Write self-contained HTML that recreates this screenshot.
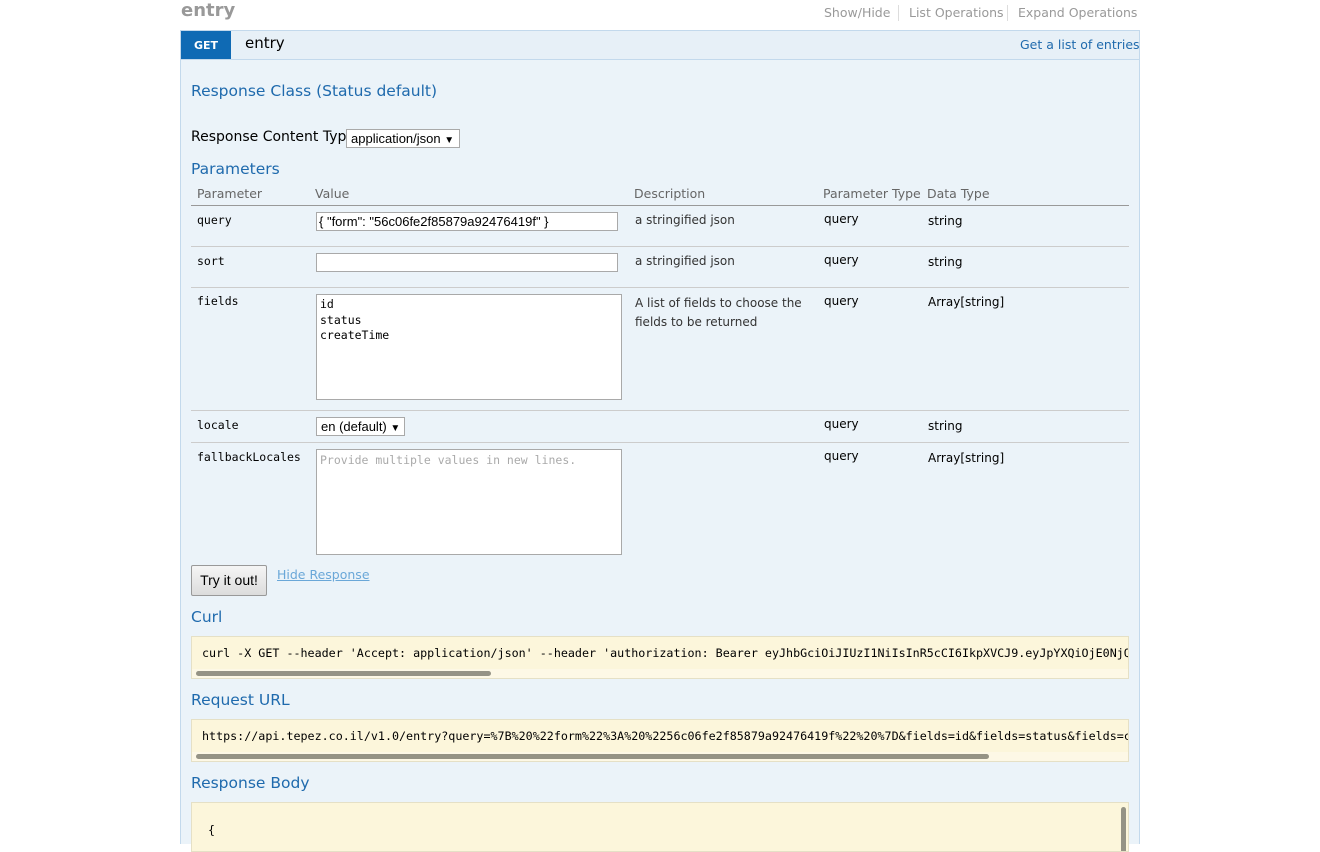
<!DOCTYPE html>
<html><head><meta charset="utf-8"><style>
*{box-sizing:border-box;margin:0;padding:0}
body{width:1320px;height:844px;overflow:hidden;background:#fff;font-family:"DejaVu Sans","Liberation Sans",sans-serif;position:relative}
.a{position:absolute;white-space:nowrap}
.h{color:#1f6aad;font-size:15.5px}
.m{font-family:"DejaVu Sans Mono","Liberation Mono",monospace;font-size:11.5px;color:#000}
.s{font-size:12px;color:#333}
.hr{position:absolute;left:191px;width:938px;height:1px;background:#ccc}
.ta{position:absolute;background:#fff;border:1px solid #a9a9a9}
.box{position:absolute;left:191px;width:938px;background:#fcf6db;border:1px solid #e5e0c6;overflow:hidden}
.sb{position:absolute;height:5px;border-radius:3px;background:#959385}
</style></head><body>
<div class="a" style="left:181px;top:0px;font-size:18px;font-weight:bold;color:#999">entry</div>
<div class="a" style="left:824px;top:5px;font-size:12.5px;color:#999">Show/Hide</div>
<div class="a" style="left:898px;top:5px;width:1px;height:16px;background:#ddd"></div>
<div class="a" style="left:909px;top:5px;font-size:12.5px;color:#999">List Operations</div>
<div class="a" style="left:1007px;top:5px;width:1px;height:16px;background:#ddd"></div>
<div class="a" style="left:1018px;top:5px;font-size:12.5px;color:#999">Expand Operations</div>

<div class="a" style="left:180px;top:30px;width:960px;height:814px;background:#ebf3f9;border:1px solid #c3d9ec;border-bottom:none"></div>
<div class="a" style="left:181px;top:31px;width:958px;height:29px;background:#e7f0f7;border-bottom:1px solid #c3d9ec"></div>
<div class="a" style="left:181px;top:31px;width:50px;height:28px;background:#0f6ab4;color:#fff;font-size:11px;font-weight:bold;text-align:center;line-height:29px">GET</div>
<div class="a" style="left:245px;top:34px;font-size:15px;color:#000">entry</div>
<div class="a" style="left:1020px;top:37px;font-size:12.5px;color:#1f6aad">Get a list of entries</div>

<div class="a h" style="left:191px;top:82px">Response Class (Status default)</div>
<div class="a" style="left:191px;top:129px;font-size:14px;color:#000">Response Content Type</div>
<div class="a" style="left:346px;top:129px;width:114px;height:19px;background:#fff;border:1px solid #a9a9a9;font-family:'Liberation Sans',sans-serif;font-size:13px;padding:1px 4px">application/json <span style="font-size:10px">▼</span></div>
<div class="a h" style="left:191px;top:160px">Parameters</div>

<div class="a" style="left:197px;top:186px;font-size:12.5px;color:#666">Parameter</div>
<div class="a" style="left:315px;top:186px;font-size:12.5px;color:#666">Value</div>
<div class="a" style="left:634px;top:186px;font-size:12.5px;color:#666">Description</div>
<div class="a" style="left:823px;top:186px;font-size:12.5px;color:#666">Parameter Type</div>
<div class="a" style="left:927px;top:186px;font-size:12.5px;color:#666">Data Type</div>
<div class="hr" style="top:205px;background:#999"></div>

<div class="a m" style="left:197px;top:213px">query</div>
<div class="ta" style="left:316px;top:212px;width:302px;height:19px;font-family:'Liberation Sans',sans-serif;font-size:13px;padding:0 2px;line-height:17px">{ "form": "56c06fe2f85879a92476419f" }</div>
<div class="a s" style="left:635px;top:213px">a stringified json</div>
<div class="a s" style="left:824px;top:212px;color:#000">query</div>
<div class="a s" style="left:928px;top:214px;color:#000">string</div>
<div class="hr" style="top:246px"></div>

<div class="a m" style="left:197px;top:254px">sort</div>
<div class="ta" style="left:316px;top:253px;width:302px;height:19px"></div>
<div class="a s" style="left:635px;top:254px">a stringified json</div>
<div class="a s" style="left:824px;top:253px;color:#000">query</div>
<div class="a s" style="left:928px;top:255px;color:#000">string</div>
<div class="hr" style="top:287px"></div>

<div class="a m" style="left:197px;top:294px">fields</div>
<div class="ta m" style="left:316px;top:294px;width:306px;height:106px;padding:2px 3px;line-height:15.5px;white-space:pre">id
status
createTime</div>
<div class="a s" style="left:635px;top:294px;line-height:19px">A list of fields to choose the<br>fields to be returned</div>
<div class="a s" style="left:824px;top:294px;color:#000">query</div>
<div class="a s" style="left:928px;top:295px;color:#000">Array[string]</div>
<div class="hr" style="top:410px"></div>

<div class="a m" style="left:197px;top:418px">locale</div>
<div class="a" style="left:316px;top:417px;width:89px;height:19px;background:#fff;border:1px solid #a9a9a9;font-family:'Liberation Sans',sans-serif;font-size:13px;padding:1px 4px">en (default) <span style="font-size:10px">▼</span></div>
<div class="a s" style="left:824px;top:417px;color:#000">query</div>
<div class="a s" style="left:928px;top:419px;color:#000">string</div>
<div class="hr" style="top:442px"></div>

<div class="a m" style="left:197px;top:450px">fallbackLocales</div>
<div class="ta m" style="left:316px;top:449px;width:306px;height:106px;padding:3px 3px;color:#aaa">Provide multiple values in new lines.</div>
<div class="a s" style="left:824px;top:449px;color:#000">query</div>
<div class="a s" style="left:928px;top:451px;color:#000">Array[string]</div>

<div class="a" style="left:191px;top:565px;width:76px;height:31px;border:1px solid #999;border-radius:2px;background:linear-gradient(#f5f5f5,#dcdcdc);font-family:'Liberation Sans',sans-serif;font-size:14px;text-align:center;line-height:29px;color:#000">Try it out!</div>
<div class="a" style="left:277px;top:567px;font-size:12.5px;color:#6aa7d8;text-decoration:underline">Hide Response</div>

<div class="a h" style="left:191px;top:608px">Curl</div>
<div class="box" style="top:636px;height:43px"><div class="a m" style="left:10px;top:9px;font-size:11.7px">curl -X GET --header 'Accept: application/json' --header 'authorization: Bearer eyJhbGciOiJIUzI1NiIsInR5cCI6IkpXVCJ9.eyJpYXQiOjE0NjQ2NTg</div><div class="a" style="left:0;top:32px;width:938px;height:10px;background:#fdf8e6"></div><div class="sb" style="left:4px;top:34px;width:295px"></div></div>

<div class="a h" style="left:191px;top:691px">Request URL</div>
<div class="box" style="top:719px;height:43px"><div class="a m" style="left:10px;top:9px;font-size:11.7px">https://api.tepez.co.il/v1.0/entry?query=%7B%20%22form%22%3A%20%2256c06fe2f85879a92476419f%22%20%7D&amp;fields=id&amp;fields=status&amp;fields=createTime</div><div class="a" style="left:0;top:32px;width:938px;height:10px;background:#fdf8e6"></div><div class="sb" style="left:4px;top:34px;width:793px"></div></div>

<div class="a h" style="left:191px;top:774px">Response Body</div>
<div class="box" style="top:802px;height:50px"><div class="a m" style="left:16px;top:20px">{</div><div class="a" style="left:929px;top:4px;width:5px;height:60px;border-radius:3px;background:#959385"></div></div>
</body></html>
